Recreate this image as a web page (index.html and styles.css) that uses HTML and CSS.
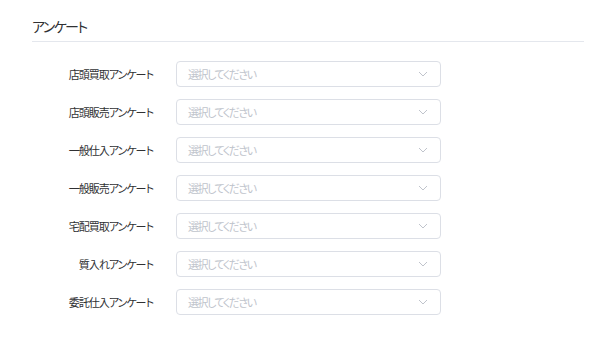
FILE: index.html
```html
<!DOCTYPE html>
<html lang="ja">
<head>
    <meta charset="UTF-8">
    <title>アンケート</title>
    <link rel="stylesheet" href="styles.css">
</head>
<body>
    <div class="panel">
        <h2 class="panel-title">アンケート</h2>

        <form class="survey-form">
            <div class="form-row">
                <label class="form-label">店頭買取アンケート</label>
                <div class="select-box">
                    <span class="placeholder">選択してください</span>
                    <svg class="arrow" width="10" height="6" viewBox="0 0 10 6"><path d="M1 1l4 4 4-4" fill="none" stroke="#c0c4cc" stroke-width="1"/></svg>
                </div>
            </div>
            <div class="form-row">
                <label class="form-label">店頭販売アンケート</label>
                <div class="select-box">
                    <span class="placeholder">選択してください</span>
                    <svg class="arrow" width="10" height="6" viewBox="0 0 10 6"><path d="M1 1l4 4 4-4" fill="none" stroke="#c0c4cc" stroke-width="1"/></svg>
                </div>
            </div>
            <div class="form-row">
                <label class="form-label">一般仕入アンケート</label>
                <div class="select-box">
                    <span class="placeholder">選択してください</span>
                    <svg class="arrow" width="10" height="6" viewBox="0 0 10 6"><path d="M1 1l4 4 4-4" fill="none" stroke="#c0c4cc" stroke-width="1"/></svg>
                </div>
            </div>
            <div class="form-row">
                <label class="form-label">一般販売アンケート</label>
                <div class="select-box">
                    <span class="placeholder">選択してください</span>
                    <svg class="arrow" width="10" height="6" viewBox="0 0 10 6"><path d="M1 1l4 4 4-4" fill="none" stroke="#c0c4cc" stroke-width="1"/></svg>
                </div>
            </div>
            <div class="form-row">
                <label class="form-label">宅配買取アンケート</label>
                <div class="select-box">
                    <span class="placeholder">選択してください</span>
                    <svg class="arrow" width="10" height="6" viewBox="0 0 10 6"><path d="M1 1l4 4 4-4" fill="none" stroke="#c0c4cc" stroke-width="1"/></svg>
                </div>
            </div>
            <div class="form-row">
                <label class="form-label">質入れアンケート</label>
                <div class="select-box">
                    <span class="placeholder">選択してください</span>
                    <svg class="arrow" width="10" height="6" viewBox="0 0 10 6"><path d="M1 1l4 4 4-4" fill="none" stroke="#c0c4cc" stroke-width="1"/></svg>
                </div>
            </div>
            <div class="form-row">
                <label class="form-label">委託仕入アンケート</label>
                <div class="select-box">
                    <span class="placeholder">選択してください</span>
                    <svg class="arrow" width="10" height="6" viewBox="0 0 10 6"><path d="M1 1l4 4 4-4" fill="none" stroke="#c0c4cc" stroke-width="1"/></svg>
                </div>
            </div>
        </form>
    </div>
</body>
</html>
```

FILE: styles.css
```css
/* Global styles */
body {
    margin: 0;
    background-color: #fff;
    font-family: "Noto Sans CJK JP", "Noto Sans", sans-serif;
    font-feature-settings: "palt";
    color: #303133;
}

.panel {
    padding: 16px 16px 0 32px;
}

.panel-title {
    margin: 0;
    font-size: 14px;
    font-weight: normal;
    line-height: 20px;
    letter-spacing: -1.6px;
    padding-bottom: 5px;
    border-bottom: 1px solid #e4e7ed;
}

/* Form rows */
.survey-form {
    padding-top: 19px;
    display: flex;
    flex-direction: column;
    gap: 12px;
}

.form-row {
    display: flex;
    align-items: center;
}

.form-label {
    width: 121px;
    padding-right: 23px;
    text-align: right;
    font-size: 11px;
    letter-spacing: -1px;
    color: #303133;
}

/* Select box */
.select-box {
    box-sizing: border-box;
    width: 265px;
    height: 26px;
    border: 1px solid #dcdfe6;
    border-radius: 4px;
    padding: 0 11px;
    display: flex;
    align-items: center;
    justify-content: space-between;
}

.placeholder {
    font-size: 11px;
    letter-spacing: -1.5px;
    color: #c0c4cc;
}

.arrow {
    margin-right: 1px;
}
```
